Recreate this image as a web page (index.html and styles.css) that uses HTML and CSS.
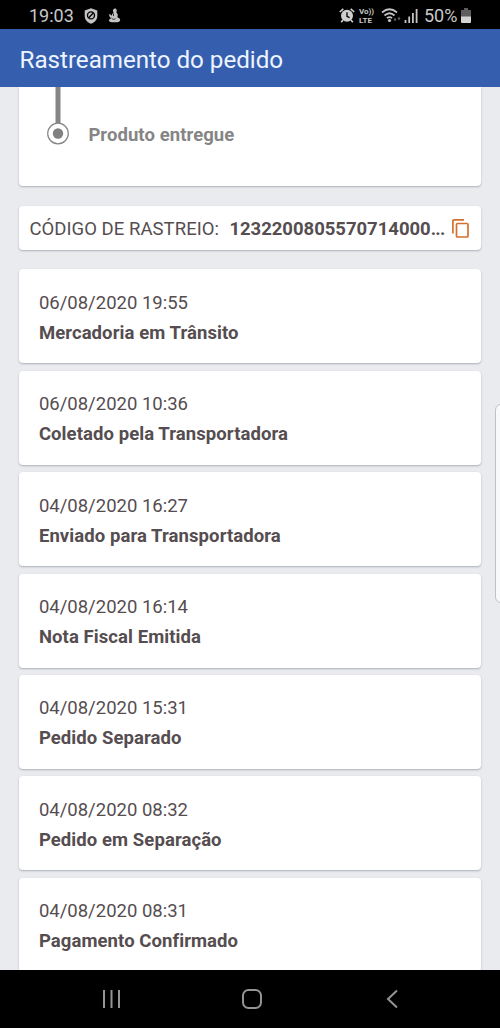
FILE: index.html
```html
<!DOCTYPE html>
<html lang="pt-BR">
<head>
<meta charset="utf-8">
<title>Rastreamento do pedido</title>
<link rel="stylesheet" href="styles.css">
</head>
<body>
<div class="screen">
  <div class="status">
    <span class="clock">19:03</span>
    <svg class="shield" width="14" height="16" viewBox="0 0 14 16"><path d="M7 .3 13.3 2.5V8c0 3.7-2.6 6.4-6.3 7.7C3.300 14.400.7 11.700.7 8V2.500z" fill="#c4c4c4"/><circle cx="7" cy="7.400" r="3.500" fill="none" stroke="#000" stroke-width="1.400"/><path d="M4.700 9.700 9.300 5.100" stroke="#000" stroke-width="1.400"/></svg>
    <svg class="figure" width="13" height="15" viewBox="0 0 13 15"><path d="M5.500 1.200C6.400.2 8.200.5 8.600 1.800 9 3 8.300 3.800 8.500 4.700c1.600 1.200 1.500 3.100.8 4.500 1.300.5 2.900 1.100 2.900 2.700 0 1.700-1.700 2.300-5.200 2.300-3.300 0-6-.2-6-1.800 0-1 .8-1.700 2.100-1.900C1.600 9.200.8 7.500 1.400 6.100c1 .2 1.700 1 2.400 1.600.1-1.400.7-2.200 1.900-2.900C4.900 3.700 4.700 2.200 5.500 1.200z" fill="#c4c4c4"/><path d="M3.500 10c1.200 1.500 2.800 1.600 4 .7M5.500 5.500v2.500" stroke="#333" fill="none"/></svg>
    <div class="indicators">
      <svg width="16" height="15" viewBox="0 0 16 15"><circle cx="8" cy="7.800" r="6" fill="#cfcfcf"/><path d="M8 4.300V8.300l2.600 1.300" fill="none" stroke="#000" stroke-width="1.300"/><path d="M.8 4 4.300.8M15.200 4 11.700.8M4 12l-1.800 2.200M12 12l1.800 2.200" stroke="#cfcfcf" stroke-width="1.600"/></svg>
      <div class="volte"><span>Vo))</span><span>LTE</span></div>
      <svg class="wifi" width="20" height="15" viewBox="0 0 20 15"><g fill="none" stroke="#c4c4c4" stroke-width="1.700"><path d="M1 4.500Q8.500-2 16 4.500"/><path d="M3.500 7.500Q8.500 3 13.500 7.500"/><path d="M5.900 10.200Q8.500 8 11.100 10.200"/></g><circle cx="8.500" cy="12.500" r="1.600" fill="#c4c4c4"/><path d="m12.500 11.500 1.500-2 1.500 2-1.500 2zM16.500 10.500 18 8.500l1.500 2-1.500 2z" fill="#555"/></svg>
      <svg class="signal" width="14" height="14" viewBox="0 0 14 14"><path d="M1.500 14v-3M5.200 14V7.500M8.900 14V4M12.600 14V0" stroke="#c4c4c4" stroke-width="1.800"/></svg>
      <span class="percent">50%</span>
      <svg class="battery" width="10" height="15" viewBox="0 0 10 15"><path d="M3 0h4v2h3v7H0V2h3z" fill="#5d5d5d"/><path d="M0 8.500h10V14q0 1-1 1H1q-1 0-1-1z" fill="#d3d3d3"/></svg>
    </div>
  </div>
  <header class="appbar"><h1>Rastreamento do pedido</h1></header>
  <main class="content">
    <section class="card progress">
      <svg class="marker" width="24" height="60" viewBox="0 0 24 60"><path d="M12 0v36" stroke="#858585" stroke-width="5"/><circle cx="12" cy="46.500" r="10.300" fill="#fff" stroke="#858585" stroke-width="1.200"/><circle cx="12" cy="46.500" r="5.200" fill="#808080"/></svg>
      <span class="step">Produto entregue</span>
    </section>
    <section class="card code">
      <span class="label">CÓDIGO DE RASTREIO:</span>
      <span class="number">1232200805570714000<span class="dots">...</span></span>
      <svg class="copy" width="17" height="19" viewBox="0 0 17 19"><path d="M.9 14.500V2Q.9.900 2 .9H12M5.500 4.500H15q1 0 1 1V17q0 1-1 1H5.500q-1 0-1-1V5.500q0-1 1-1z" fill="none" stroke="#d4702f" stroke-width="1.700"/></svg>
    </section>
    <section class="events">
      <article class="card event"><time>06/08/2020 19:55</time><strong>Mercadoria em Trânsito</strong></article>
      <article class="card event"><time>06/08/2020 10:36</time><strong>Coletado pela Transportadora</strong></article>
      <article class="card event"><time>04/08/2020 16:27</time><strong>Enviado para Transportadora</strong></article>
      <article class="card event"><time>04/08/2020 16:14</time><strong>Nota Fiscal Emitida</strong></article>
      <article class="card event"><time>04/08/2020 15:31</time><strong>Pedido Separado</strong></article>
      <article class="card event"><time>04/08/2020 08:32</time><strong>Pedido em Separação</strong></article>
      <article class="card event"><time>04/08/2020 08:31</time><strong>Pagamento Confirmado</strong></article>
    </section>
  </main>
  <nav class="navbar">
    <svg width="20" height="20" viewBox="0 0 20 20"><path d="M3 1v18M10.500 1v18M18 1v18" stroke="#949494" stroke-width="2"/></svg>
    <svg width="20" height="20" viewBox="0 0 20 20"><rect x="1" y="1" width="18" height="18" rx="5.500" fill="none" stroke="#949494" stroke-width="2"/></svg>
    <svg width="20" height="20" viewBox="0 0 20 20"><path d="M15 1.500 6 10l9 8.500" fill="none" stroke="#949494" stroke-width="2"/></svg>
  </nav>
  <div class="edge-handle"></div>
</div>
</body>
</html>
```
FILE: styles.css
```css
* { box-sizing: border-box; }
body { margin: 0; font-family: Roboto, sans-serif; }
svg { display: block; flex: none; }
.screen { position: relative; width: 500px; height: 1028px; display: flex; flex-direction: column; overflow: hidden; background: #e9ebef; }
.status { height: 29px; flex: none; display: flex; align-items: center; padding: 2px 29px 0 29px; background: #000; color: #c8c8c8; }
.clock { width: 46px; font-size: 18px; line-height: 28px; }
.shield { margin-left: 9px; }
.figure { margin-left: 10px; }
.indicators { display: flex; align-items: center; margin-left: auto; }
.volte { display: flex; flex-direction: column; width: 16px; margin-left: 4px; font-size: 8px; line-height: 9px; font-weight: 700; }
.wifi { margin-left: 6px; }
.signal { margin-left: 3px; }
.percent { width: 34px; margin-left: 6px; font-size: 18px; line-height: 28px; white-space: nowrap; }
.battery { margin-left: 3px; }
.appbar { height: 58px; flex: none; display: flex; align-items: center; padding: 3px 19.600px 0; background: #355fae; }
.appbar h1 { margin: 0; color: #edf4ff; font-size: 24.200px; line-height: 32px; font-weight: 400; letter-spacing: -.03px; white-space: nowrap; }
.content { flex: 1; min-height: 0; overflow: hidden; padding: 0 19.500px 0 19.400px; }
.card { background: #fff; border-radius: 4px; box-shadow: 0 1px 2px rgba(70, 80, 95, .38); }
.progress { display: flex; height: 99px; padding-left: 26.600px; border-radius: 0 0 4px 4px; }
.step { margin: 35px 0 0 18.400px; color: #858585; font-size: 18.500px; line-height: 26px; font-weight: 700; letter-spacing: .07px; }
.code { display: flex; align-items: center; height: 44px; margin-top: 20px; padding: 2px 12px 0 10px; color: #554d50; font-size: 18.500px; white-space: nowrap; }
.label { width: 200px; letter-spacing: .05px; }
.number { font-weight: 700; letter-spacing: -.02px; }
.dots { letter-spacing: -.7px; }
.copy { margin: -2px 0 0 auto; }
.events { display: flex; flex-direction: column; gap: 7.400px; margin-top: 19.400px; }
.event { display: flex; flex-direction: column; flex: none; height: 94px; padding: 18.500px 19.500px 0; color: #554d50; font-size: 18.500px; line-height: 30px; }
.event strong { font-weight: 700; letter-spacing: .08px; }
.navbar { height: 58.500px; flex: none; display: flex; align-items: center; justify-content: space-between; padding: 0 98px 0 101px; background: #000; }
.edge-handle { position: absolute; left: 495px; top: 404px; width: 12px; height: 199px; border: 1px solid #bfc1c4; border-radius: 6px; background: #f8f9fb; }
```
